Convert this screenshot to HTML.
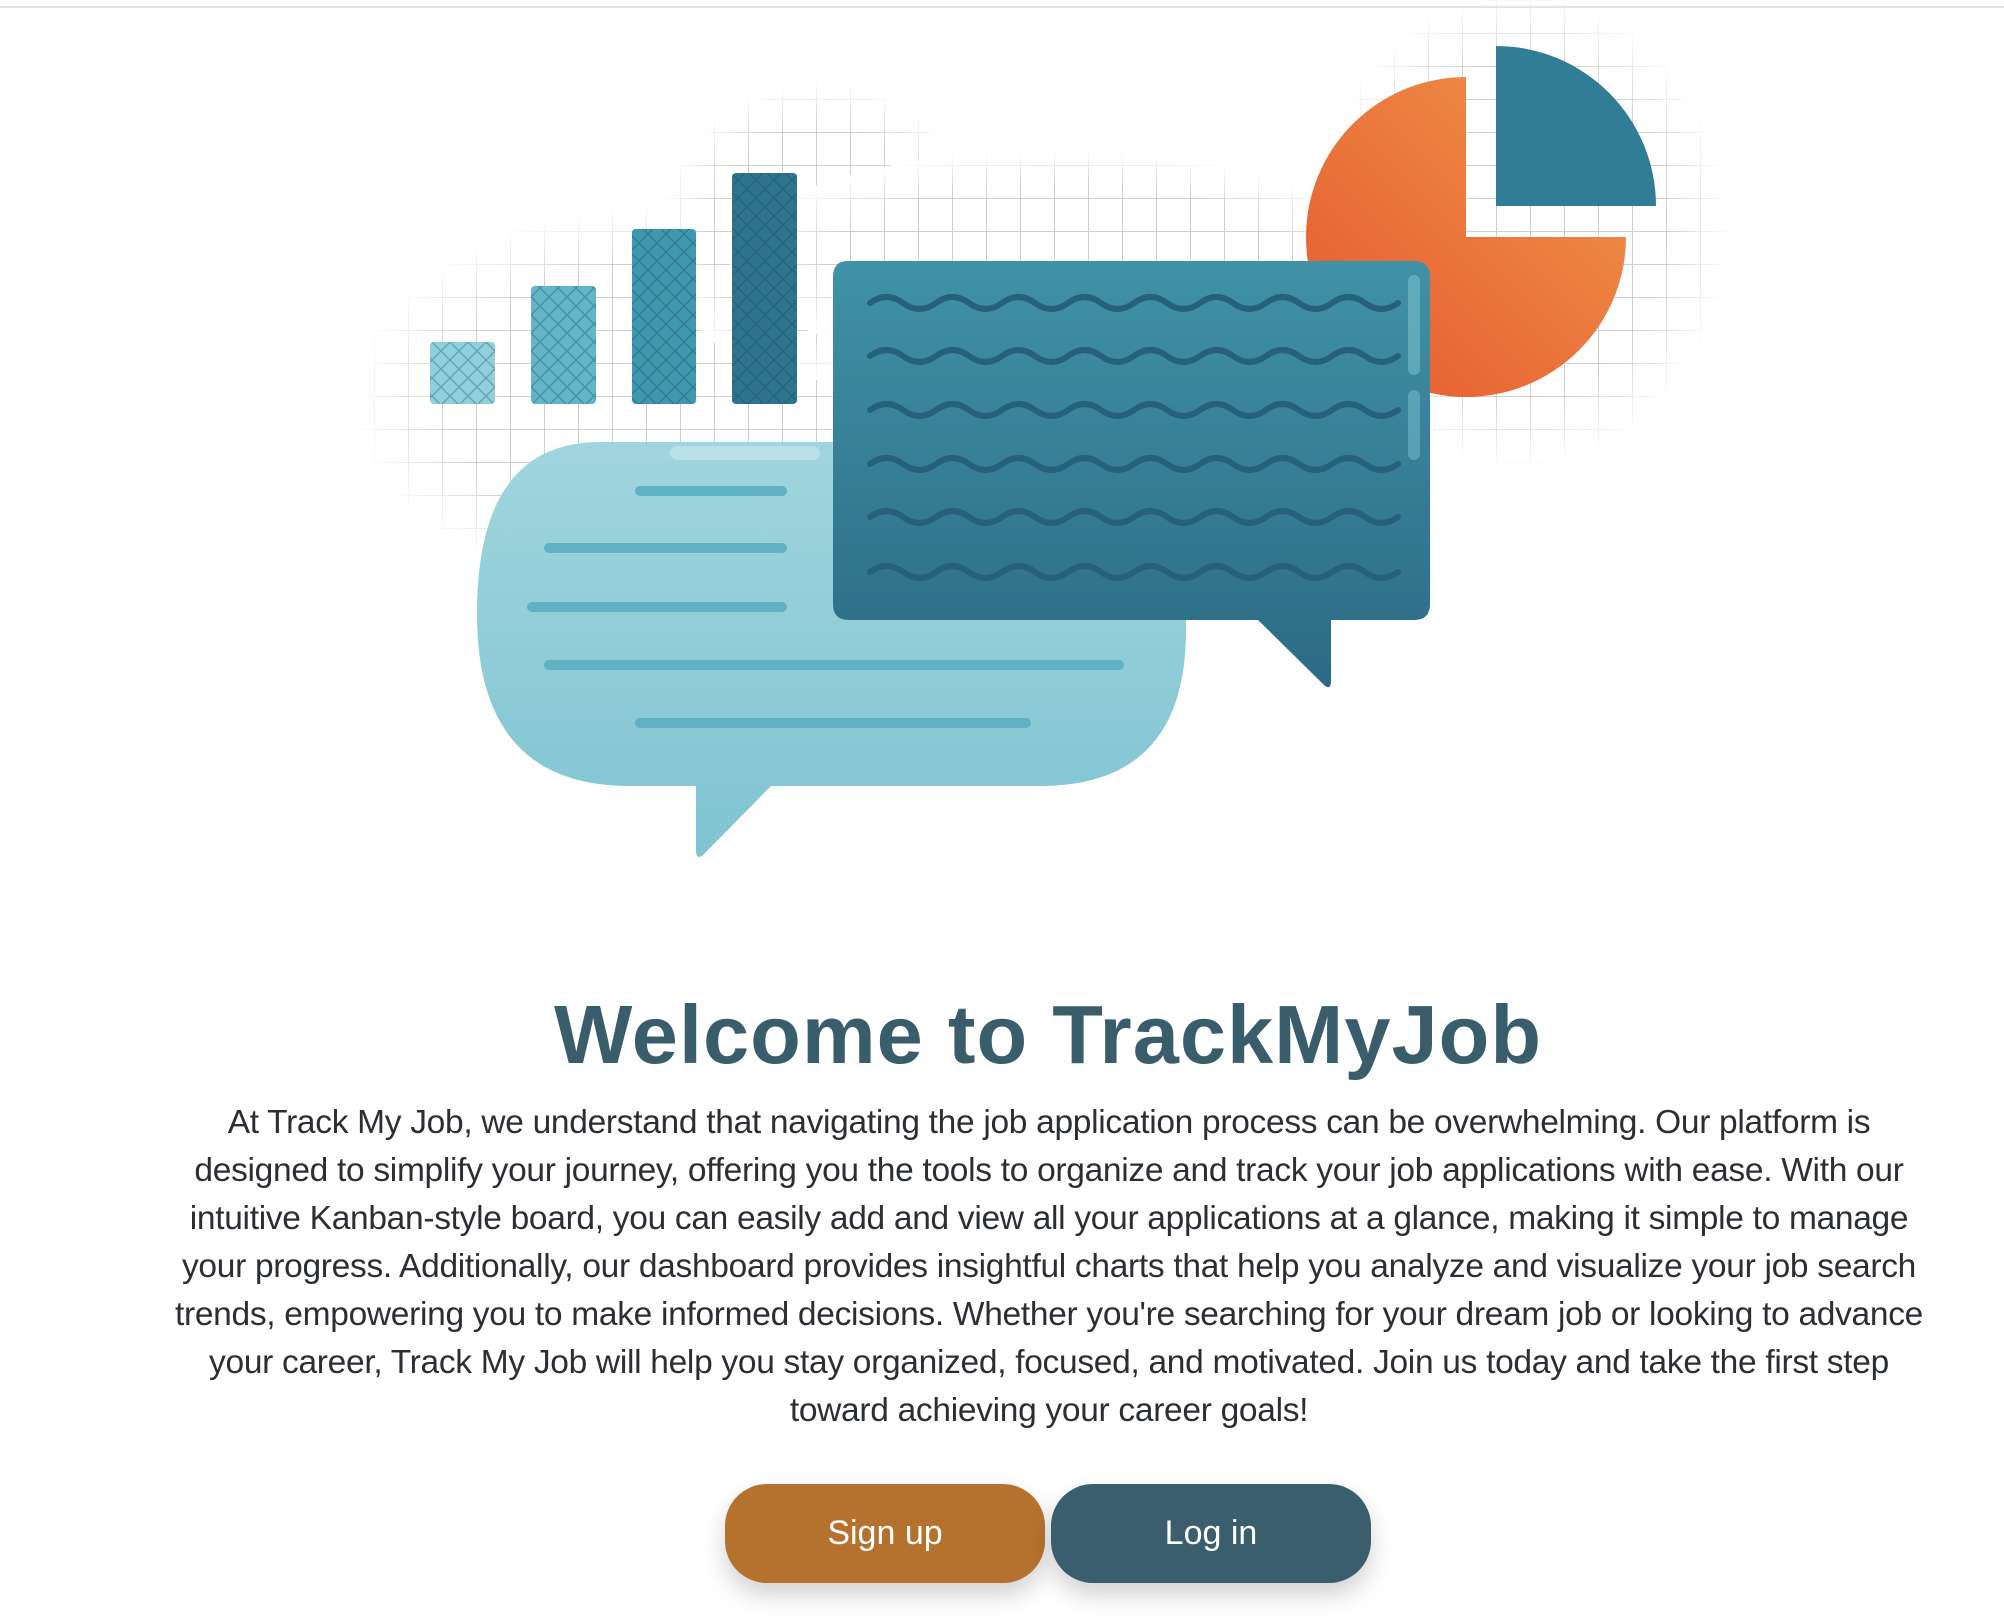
<!DOCTYPE html>
<html><head><meta charset="utf-8"><style>
html,body{margin:0;padding:0;background:#fff;width:2004px;height:1622px;overflow:hidden;}
.topline{position:absolute;left:0;top:6px;width:2004px;height:2px;background:#e3e3e3;}
svg.art{position:absolute;left:0;top:0;}
h1{position:absolute;left:46px;top:985px;width:2004px;margin:0;text-align:center;font-family:"Liberation Sans",sans-serif;font-weight:700;font-size:83px;color:#3a5d6c;letter-spacing:1px;line-height:100px;}
p{position:absolute;left:84px;top:1099px;width:1930px;margin:0;text-align:center;font-family:"Liberation Sans",sans-serif;font-size:33.5px;line-height:48px;color:#2b2f33;letter-spacing:-0.3px;white-space:nowrap;}
.btn{position:absolute;top:1484px;width:320px;height:99px;border-radius:42px;color:#fff;font-family:"Liberation Sans",sans-serif;font-size:34px;text-align:center;line-height:99px;box-shadow:0 12px 24px rgba(0,0,0,0.18);}
</style></head><body>
<div class="topline"></div>
<svg class="art" width="2004" height="900" viewBox="0 0 2004 900">
<defs>
<pattern id="g" width="34" height="33" patternUnits="userSpaceOnUse"><path d="M0 0H34M0 0V33" stroke="#cfcfcf" stroke-width="2" fill="none"/></pattern>
<radialGradient id="m1" cx="0.5" cy="0.5" r="0.5"><stop offset="0.7" stop-color="#fff"/><stop offset="1" stop-color="#000"/></radialGradient>
<mask id="mk"><rect width="2004" height="900" fill="#000"/>
<ellipse cx="680" cy="400" rx="330" ry="200" fill="url(#m1)"/>
<ellipse cx="820" cy="230" rx="160" ry="150" fill="url(#m1)"/>
<ellipse cx="1060" cy="260" rx="330" ry="110" fill="url(#m1)"/>
<ellipse cx="1520" cy="230" rx="210" ry="240" fill="url(#m1)"/>
</mask>
<linearGradient id="db" x1="0" y1="0" x2="0" y2="1"><stop offset="0" stop-color="#4092a6"/><stop offset="1" stop-color="#2c6a84"/></linearGradient>
<linearGradient id="lb" x1="0" y1="0" x2="0" y2="1"><stop offset="0" stop-color="#a1d5de"/><stop offset="1" stop-color="#7fc4d1"/></linearGradient>
<linearGradient id="or" x1="1" y1="0" x2="0" y2="1"><stop offset="0" stop-color="#f0964d"/><stop offset="1" stop-color="#e5582b"/></linearGradient>
<pattern id="hx" width="18" height="18" patternUnits="userSpaceOnUse"><path d="M0 0L18 18M18 0L0 18" stroke="rgba(20,60,80,0.3)" stroke-width="1.5"/></pattern>
<path id="wv" d="M0 0 q16.5 -12 33 0 t33 0 t33 0 t33 0 t33 0 t33 0 t33 0 t33 0 t33 0 t33 0 t33 0 t33 0 t33 0 t33 0 t33 0 t33 0 " fill="none" stroke="#26607a" stroke-width="6" stroke-linecap="round"/>
</defs>
<rect width="2004" height="900" fill="url(#g)" mask="url(#mk)"/>
<g>
<rect x="430" y="342" width="65" height="62" rx="4" fill="#8fd0dc"/>
<rect x="531" y="286" width="65" height="118" rx="4" fill="#62b6c8"/>
<rect x="632" y="229" width="64" height="175" rx="4" fill="#3f98ae"/>
<rect x="732" y="173" width="65" height="231" rx="4" fill="#2f748f"/>
<rect x="430" y="342" width="65" height="62" rx="4" fill="url(#hx)"/>
<rect x="531" y="286" width="65" height="118" rx="4" fill="url(#hx)"/>
<rect x="632" y="229" width="64" height="175" rx="4" fill="url(#hx)"/>
<rect x="732" y="173" width="65" height="231" rx="4" fill="url(#hx)"/>
</g>
<path d="M1466 77 A160 160 0 1 0 1626 237 L1466 237 Z" fill="url(#or)"/>
<path d="M1496 46 A160 160 0 0 1 1656 206 L1496 206 Z" fill="#327d96"/>
<path d="M600 442 H1040 Q1186 442 1186 600 V630 Q1186 786 1040 786 H771 L703 855 Q697 860 696 852 V786 H630 Q477 786 477 614 Q477 442 600 442Z" fill="url(#lb)"/>
<g stroke="#5fb1c3" stroke-width="10" stroke-linecap="round">
<line x1="640" y1="491" x2="782" y2="491"/><line x1="549" y1="548" x2="782" y2="548"/><line x1="532" y1="607" x2="782" y2="607"/><line x1="549" y1="665" x2="1119" y2="665"/><line x1="640" y1="723" x2="1026" y2="723"/>
</g>
<rect x="670" y="446" width="150" height="14" rx="7" fill="#c4e6ec" opacity="0.7"/>
<path d="M848 261 H1414 Q1430 261 1430 277 V604 Q1430 620 1414 620 H1331 V680 Q1331 692 1323 684 L1258 620 H849 Q833 620 833 604 V277 Q833 261 848 261Z" fill="url(#db)"/>
<g>
<use href="#wv" x="870" y="303"/><use href="#wv" x="870" y="356"/><use href="#wv" x="870" y="410"/><use href="#wv" x="870" y="464"/><use href="#wv" x="870" y="517"/><use href="#wv" x="870" y="572"/>
</g>
<rect x="1408" y="275" width="12" height="100" rx="6" fill="#6fb6c6" opacity="0.7"/>
<rect x="1408" y="390" width="12" height="70" rx="6" fill="#6fb6c6" opacity="0.6"/>
</svg>
<h1>Welcome to TrackMyJob</h1>
<p>At Track My Job, we understand that navigating the job application process can be overwhelming. Our platform is<br>designed to simplify your journey, offering you the tools to organize and track your job applications with ease. With our<br>intuitive Kanban-style board, you can easily add and view all your applications at a glance, making it simple to manage<br>your progress. Additionally, our dashboard provides insightful charts that help you analyze and visualize your job search<br>trends, empowering you to make informed decisions. Whether you're searching for your dream job or looking to advance<br>your career, Track My Job will help you stay organized, focused, and motivated. Join us today and take the first step<br>toward achieving your career goals!</p>
<div class="btn" style="left:725px;background:#b5722f;">Sign up</div>
<div class="btn" style="left:1051px;background:#3a5e6d;">Log in</div>
</body></html>
